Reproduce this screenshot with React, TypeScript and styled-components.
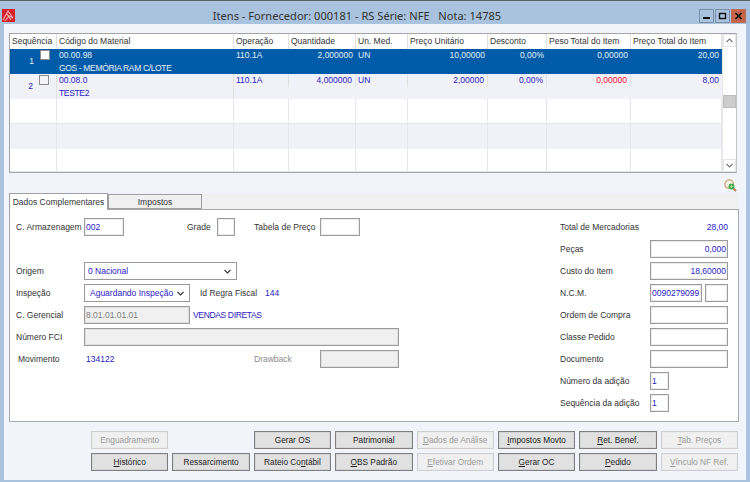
import React from "react";
import styled, { createGlobalStyle } from "styled-components";

const Global = createGlobalStyle`
  html, body { margin: 0; padding: 0; background: #a9c2dd; }
  * { box-sizing: border-box; }
`;

const BLUE = "#2a20c4";
const FONT = `"Liberation Sans", Arial, sans-serif`;
const TITLEFONT = `"Noto Sans", "Liberation Sans", sans-serif`;

const Win = styled.div`
  width: 750px; height: 482px; overflow: hidden; display: flex; flex-direction: column;
  background: #a9c2dd; border-top: 1px solid #5b5f66; font-family: ${FONT}; font-size: 8.5px; color: #333;
`;
const TitleBar = styled.div`
  height: 23px; flex: none; display: flex; align-items: center; padding: 6px 4px 0 2px;
`;
const Title = styled.div`flex: 1; text-align: center; font-family: ${TITLEFONT}; font-size: 11.1px; color: #333; white-space: pre;`;
const WinButtons = styled.div`display: flex; gap: 1px;`;
const WinBtn = styled.div<{ $close?: boolean }>`
  width: 15px; height: 14px; display: flex; align-items: center; justify-content: center;
  background: ${p => (p.$close ? "#c8634a" : "#a9c2dd")};
  border: 1px solid ${p => (p.$close ? "#b5705c" : "#7d8fa6")};
`;
const Body = styled.div`
  margin: 0 4px 2px 4px; flex: 1; background: #f1f4fb; padding: 9px 7px 0 5px;
  display: flex; flex-direction: column; min-height: 0;
`;
const GridBox = styled.div`
  width: 728px; height: 140px; flex: none; background: #fff; display: flex;
  border: 1px solid #a5a5a5; border-right-color: #c6c6c6;
`;
const GridMain = styled.div`flex: 1; min-width: 0; display: flex; flex-direction: column; overflow: hidden;`;
const COLS = "47px 177px 55px 67px 52px 80px 59px 84px 91px";
const HeaderRow = styled.div`
  height: 15px; flex: none; display: grid; grid-template-columns: ${COLS}; background: #fff;
`;
const HeaderCell = styled.div`
  border-right: 1px solid #e2e2e2; padding: 0 0 0 2px; line-height: 15px; white-space: nowrap; overflow: hidden; color: #333;
`;
const DataRow = styled.div<{ $selected?: boolean; $alt?: boolean; $h?: number }>`
  height: ${p => p.$h ?? 25}px; flex: none; display: grid; grid-template-columns: ${COLS};
  background: ${p => (p.$selected ? "#005ca8" : p.$alt ? "#f1f2f8" : "#fff")};
  color: ${p => (p.$selected ? "#e8eef6" : BLUE)};
  ${p => (!p.$selected && !p.$alt ? "border-bottom: 1px solid #e6e6e6;" : "")}
`;
const Cell = styled.div<{ $right?: boolean; $red?: boolean; $line?: boolean }>`
  height: 13px; line-height: 12px; padding: 0 3px 0 2px; white-space: nowrap;
  text-align: ${p => (p.$right ? "right" : "left")};
  ${p => (p.$red ? "color: #f01030;" : "")}
  ${p => (p.$line ? "border-right: 1px solid #e2e2e2;" : "")}
`;
const EmptyCell = styled.div<{ $alt?: boolean }>`
  border-right: 1px solid ${p => (p.$alt ? "#e6e6ec" : "#e6e6e6")};
`;
const SeqCell = styled.div<{ $line?: boolean }>`
  display: flex; justify-content: flex-end; gap: 6px; padding-right: 7px; padding-top: 0;
  ${p => (p.$line ? "border-right: 1px solid #e2e2e2;" : "")}
`;
const SeqNum = styled.span`margin-top: 6px; line-height: 13px;`;
const Check = styled.div<{ $filled?: boolean }>`
  width: 10px; height: 10px; margin-top: 1px; background: ${p => (p.$filled ? "#fff" : "#f4f4f8")}; border: 1px solid #8c8c8c;
`;
const CodeCell = styled.div<{ $line?: boolean }>`
  padding: 0 2px; line-height: 13px; white-space: nowrap;
  ${p => (p.$line ? "border-right: 1px solid #e2e2e2;" : "")}
`;
const Caps = styled.span`letter-spacing: -0.35px;`;
const Scrollbar = styled.div`
  width: 14px; flex: none; display: flex; flex-direction: column; background: #fff; border-left: 1px solid #e8e8e8;
`;
const ScrollArrow = styled.div`
  height: 13px; flex: none; display: flex; align-items: center; justify-content: center; background: #fff; border: 1px solid #e6e6e6;
`;
const Track = styled.div`flex: 1; padding-top: 48px;`;
const Thumb = styled.div`height: 13px; background: #cdcdcd; border: 1px solid #bdbdbd;`;
const ToolRow = styled.div`height: 20px; flex: none; width: 728px; display: flex; justify-content: flex-end; align-items: flex-end; padding-bottom: 1px;`;
const TabBand = styled.div`height: 16px; width: 730px; flex: none; background: #f0f0f0; display: flex; align-items: flex-end;`;
const Tab = styled.div<{ $active?: boolean }>`
  text-align: center; flex: none; color: #333; position: relative; white-space: nowrap;
  width: ${p => (p.$active ? 99 : 94)}px;
  height: ${p => (p.$active ? 17 : 15)}px;
  line-height: ${p => (p.$active ? 16 : 15)}px;
  margin-bottom: ${p => (p.$active ? -1 : 0)}px;
  background: ${p => (p.$active ? "#fff" : "#f0f0f0")};
  border: 1px solid #a0a0a0;
  ${p => (p.$active ? "border-bottom: none; z-index: 1;" : "border-bottom-color: #a0a0a0;")}
`;
const Panel = styled.div`
  width: 730px; height: 213px; flex: none; background: #fff; border: 1px solid #a8a8a8;
  padding: 6px 10px 0 6px; display: flex; justify-content: space-between;
`;
const Column = styled.div<{ $w: number }>`width: ${p => p.$w}px; flex: none; display: flex; flex-direction: column;`;
const FormRow = styled.div`height: 22px; flex: none; display: flex; align-items: center; white-space: nowrap;`;
const Label = styled.div<{ $w?: number; $ml?: number; $muted?: boolean }>`
  flex: none; width: ${p => (p.$w ? `${p.$w}px` : "auto")}; margin-left: ${p => p.$ml ?? 0}px;
  color: ${p => (p.$muted ? "#8a8a8a" : "#333")};
`;
const Value = styled.div<{ $w?: number; $ml?: number; $right?: boolean }>`
  flex: none; color: ${BLUE}; width: ${p => (p.$w ? `${p.$w}px` : "auto")}; margin-left: ${p => p.$ml ?? 0}px;
  text-align: ${p => (p.$right ? "right" : "left")};
`;
const Field = styled.div<{ $w: number; $ml?: number; $right?: boolean; $disabled?: boolean }>`
  flex: none; width: ${p => p.$w}px; height: 18px; margin-left: ${p => p.$ml ?? 0}px;
  border: 1px solid #9c9c9c; line-height: 16px; padding: 0 1px; overflow: hidden;
  background: ${p => (p.$disabled ? "#f0f0f0" : "#fff")};
  color: ${p => (p.$disabled ? "#808080" : BLUE)};
  text-align: ${p => (p.$right ? "right" : "left")};
  box-shadow: inset 0 0 0 1px ${p => (p.$disabled ? "#e0e0e0" : "#ececec")};
`;
const SelectBox = styled.div<{ $w: number; $pl: number }>`
  flex: none; width: ${p => p.$w}px; height: 18px; display: flex; align-items: center; justify-content: space-between;
  border: 1px solid #9a9a9a; background: #fff; color: ${BLUE}; padding: 0 5px 0 ${p => p.$pl}px;
`;
const ButtonGrid = styled.div`
  margin: 9px 0 0 82px; width: 647px; display: grid; grid-template-columns: repeat(8, 1fr); column-gap: 4px; row-gap: 4px; grid-auto-rows: 18px;
`;
const Btn = styled.div<{ $disabled?: boolean }>`
  font-size: 8.3px; line-height: 16px; text-align: center; white-space: nowrap;
  background: ${p => (p.$disabled ? "#f0f0f0" : "#e1e1e1")};
  color: ${p => (p.$disabled ? "#9a9a9a" : "#222")};
  border: 1px solid ${p => (p.$disabled ? "#cfcfcf" : "#7f7f7f")};
  box-shadow: inset 0 0 0 1px ${p => (p.$disabled ? "#ececec" : "#d6d6d6")};
  u { text-decoration: underline; }
`;

const Logo = () => (
  <svg width="13" height="13" viewBox="0 0 13 13">
    <rect width="13" height="13" fill="#d8202a" />
    <path d="M1 11 L6 2 L11 9 L7 7 L3 12 M5 5 L9 11" stroke="#f6b0b4" strokeWidth="1.1" fill="none" />
  </svg>
);
const Chevron = ({ up, color = "#555" }: { up?: boolean; color?: string }) => (
  <svg width="7" height="5" viewBox="0 0 7 5">
    <path d={up ? "M.5 4 L3.5 1 L6.5 4" : "M.5 1 L3.5 4 L6.5 1"} stroke={color} strokeWidth="1.1" fill="none" />
  </svg>
);
const Magnifier = () => (
  <svg width="13" height="13" viewBox="0 0 13 13">
    <path d="M8.5 8.5 L12 12" stroke="#c9853f" strokeWidth="2" />
    <circle cx="5.2" cy="5.2" r="4.3" fill="#f6f3ea" stroke="#c9a469" strokeWidth="1.2" />
    <circle cx="7.5" cy="7.5" r="3" fill="#45a84a" />
    <path d="M7.5 5.8 V9.2 M5.8 7.5 H9.2" stroke="#8fdc8c" strokeWidth="1" />
  </svg>
);

const columns = ["Sequência", "Código do Material", "Operação", "Quantidade", "Un. Med.", "Preço Unitário", "Desconto", "Peso Total do Item", "Preço Total do Item"];

const items = [
  { seq: "1", code: "00.00.98", desc: "GOS - MEMÓRIA RAM C/LOTE", qty: "2,000000", unit: "10,00000", peso: "0,00000", total: "20,00", selected: true },
  { seq: "2", code: "00.08.0", desc: "TESTE2", qty: "4,000000", unit: "2,00000", peso: "0,00000", total: "8,00", selected: false },
];

const emptyRows = [{ alt: false, h: 25 }, { alt: true, h: 25 }, { alt: false, h: 23 }];

const buttons: { pre?: string; key?: string; post: string; disabled?: boolean; blank?: boolean }[] = [
  { post: "Enguadramento", disabled: true },
  { post: "", blank: true },
  { post: "Gerar OS" },
  { post: "Patrimonial" },
  { key: "D", post: "ados de Análise", disabled: true },
  { key: "I", post: "mpostos Movto" },
  { key: "R", post: "et. Benef." },
  { key: "T", post: "ab. Preços", disabled: true },
  { key: "H", post: "istórico" },
  { post: "Ressarcimento" },
  { pre: "Rateio Co", key: "n", post: "tábil" },
  { key: "O", post: "BS Padrão" },
  { key: "E", post: "fetivar Ordem", disabled: true },
  { key: "G", post: "erar OC" },
  { key: "P", post: "edido" },
  { key: "V", post: "ínculo NF Ref.", disabled: true },
];

export default function App() {
  return (
    <Win>
      <Global />
      <TitleBar>
        <Logo />
        <Title>{"Itens - Fornecedor: 000181 - RS Série: NFE   Nota: 14785"}</Title>
        <WinButtons>
          <WinBtn>
            <svg width="9" height="8" viewBox="0 0 9 8"><rect x="1" y="5" width="7" height="2" fill="#111" /></svg>
          </WinBtn>
          <WinBtn>
            <svg width="9" height="8" viewBox="0 0 9 8"><rect x="1.5" y="1.5" width="6" height="5" fill="none" stroke="#111" strokeWidth="1.4" /></svg>
          </WinBtn>
          <WinBtn $close>
            <svg width="9" height="8" viewBox="0 0 9 8"><path d="M1.5 1 L7.5 7 M7.5 1 L1.5 7" stroke="#111" strokeWidth="1.7" /></svg>
          </WinBtn>
        </WinButtons>
      </TitleBar>
      <Body>
        <GridBox>
          <GridMain>
            <HeaderRow>
              {columns.map(c => <HeaderCell key={c}>{c}</HeaderCell>)}
            </HeaderRow>
            {items.map(it => {
              const line = !it.selected;
              return (
                <DataRow key={it.seq} $selected={it.selected} $alt={!it.selected}>
                  <SeqCell $line={line}>
                    <SeqNum>{it.seq}</SeqNum>
                    <Check $filled={it.selected} />
                  </SeqCell>
                  <CodeCell $line={line}>{it.code}<br /><Caps>{it.desc}</Caps></CodeCell>
                  <Cell $line={line}>110.1A</Cell>
                  <Cell $right $line={line}>{it.qty}</Cell>
                  <Cell $line={line}>UN</Cell>
                  <Cell $right $line={line}>{it.unit}</Cell>
                  <Cell $right $line={line}>0,00%</Cell>
                  <Cell $right $line={line} $red={!it.selected}>{it.peso}</Cell>
                  <Cell $right>{it.total}</Cell>
                </DataRow>
              );
            })}
            {emptyRows.map((r, i) => (
              <DataRow key={i} $alt={r.alt} $h={r.h}>
                {columns.map(c => <EmptyCell key={c} $alt={r.alt} />)}
              </DataRow>
            ))}
          </GridMain>
          <Scrollbar>
            <ScrollArrow><Chevron up color="#777" /></ScrollArrow>
            <Track><Thumb /></Track>
            <ScrollArrow><Chevron color="#777" /></ScrollArrow>
          </Scrollbar>
        </GridBox>
        <ToolRow><Magnifier /></ToolRow>
        <TabBand>
          <Tab $active>Dados Complementares</Tab>
          <Tab>Impostos</Tab>
        </TabBand>
        <Panel>
          <Column $w={383}>
            <FormRow>
              <Label $w={68}>C. Armazenagem</Label>
              <Field $w={40}>002</Field>
              <Label $w={30} $ml={63}>Grade</Label>
              <Field $w={18} />
              <Label $w={66} $ml={19}>Tabela de Preço</Label>
              <Field $w={40} />
            </FormRow>
            <FormRow />
            <FormRow>
              <Label $w={68}>Origem</Label>
              <SelectBox $w={153} $pl={3}>0 Nacional<Chevron color="#333" /></SelectBox>
            </FormRow>
            <FormRow>
              <Label $w={68}>Inspeção</Label>
              <SelectBox $w={106} $pl={5}>Aguardando Inspeção<Chevron color="#333" /></SelectBox>
              <Label $w={65} $ml={10}>Id Regra Fiscal</Label>
              <Value>144</Value>
            </FormRow>
            <FormRow>
              <Label $w={68}>C. Gerencial</Label>
              <Field $w={106} $disabled>8.01.01.01.01</Field>
              <Value $ml={3}><Caps>VENDAS DIRETAS</Caps></Value>
            </FormRow>
            <FormRow>
              <Label $w={68}>Número FCI</Label>
              <Field $w={315} $disabled />
            </FormRow>
            <FormRow>
              <Label $w={68} $ml={2}>Movimento</Label>
              <Value $w={168}>134122</Value>
              <Label $w={66} $muted>Drawback</Label>
              <Field $w={79} $disabled />
            </FormRow>
          </Column>
          <Column $w={168}>
            <FormRow>
              <Label $w={90}>Total de Mercadorias</Label>
              <Value $w={78} $right>28,00</Value>
            </FormRow>
            <FormRow><Label $w={90}>Peças</Label><Field $w={78} $right>0,000</Field></FormRow>
            <FormRow><Label $w={90}>Custo do Item</Label><Field $w={78} $right>18,60000</Field></FormRow>
            <FormRow>
              <Label $w={90}>N.C.M.</Label>
              <Field $w={52}>0090279099</Field>
              <Field $w={23} $ml={3} />
            </FormRow>
            <FormRow><Label $w={90}>Ordem de Compra</Label><Field $w={78} /></FormRow>
            <FormRow><Label $w={90}>Classe Pedido</Label><Field $w={78} /></FormRow>
            <FormRow><Label $w={90}>Documento</Label><Field $w={78} /></FormRow>
            <FormRow><Label $w={90}>Número da adição</Label><Field $w={19}>1</Field></FormRow>
            <FormRow><Label $w={90}>Sequência da adição</Label><Field $w={19}>1</Field></FormRow>
          </Column>
        </Panel>
        <ButtonGrid>
          {buttons.map((b, i) =>
            b.blank ? <span key={i} /> : (
              <Btn key={i} $disabled={b.disabled}>
                {b.pre}{b.key && <u>{b.key}</u>}{b.post}
              </Btn>
            )
          )}
        </ButtonGrid>
      </Body>
    </Win>
  );
}
